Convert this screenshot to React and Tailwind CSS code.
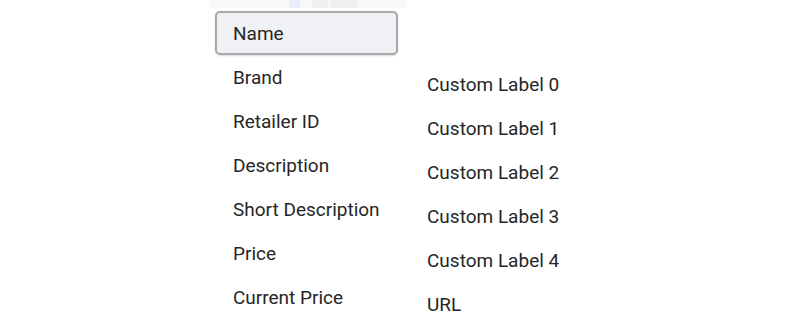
import React from "react";

const left = ["Brand", "Retailer ID", "Description", "Short Description", "Price", "Current Price"];
const right = ["Custom Label 0", "Custom Label 1", "Custom Label 2", "Custom Label 3", "Custom Label 4", "URL"];

export default function App() {
  return (
    <div
      className="w-[796px] h-[322px] bg-white overflow-hidden text-[19px] text-[#262626]"
      style={{ fontFamily: "Roboto, 'Liberation Sans', sans-serif" }}
    >
      <div className="ml-[210px] w-[196px] h-[8px] bg-[#f8f8f9] flex">
        <div className="ml-[79px] w-[11px] h-[8px] bg-[#e8eef7]" />
        <div className="ml-[12px] w-[16px] h-[8px] bg-[#f0f0f1]" />
        <div className="ml-[2px] w-[28px] h-[8px] bg-[#f0f0f1]" />
      </div>
      <div className="flex mt-[3px]">
        <div className="ml-[215px] w-[183px] flex flex-col">
          <div className="h-[44px] rounded-[5px] border-2 border-[#a9a9ab] bg-[#f0f1f4] flex items-center pl-[16px] pt-[2px] shadow-[0_1px_2px_rgba(0,0,0,0.15)]">
            Name
          </div>
          {left.map((t) => (
            <div key={t} className="h-[44px] flex items-center pl-[18px] pt-[2px]">
              {t}
            </div>
          ))}
        </div>
        <div className="ml-[29px] mt-[51px] flex flex-col">
          {right.map((t) => (
            <div key={t} className="h-[44px] flex items-center pt-[2px]">
              {t}
            </div>
          ))}
        </div>
      </div>
    </div>
  );
}
